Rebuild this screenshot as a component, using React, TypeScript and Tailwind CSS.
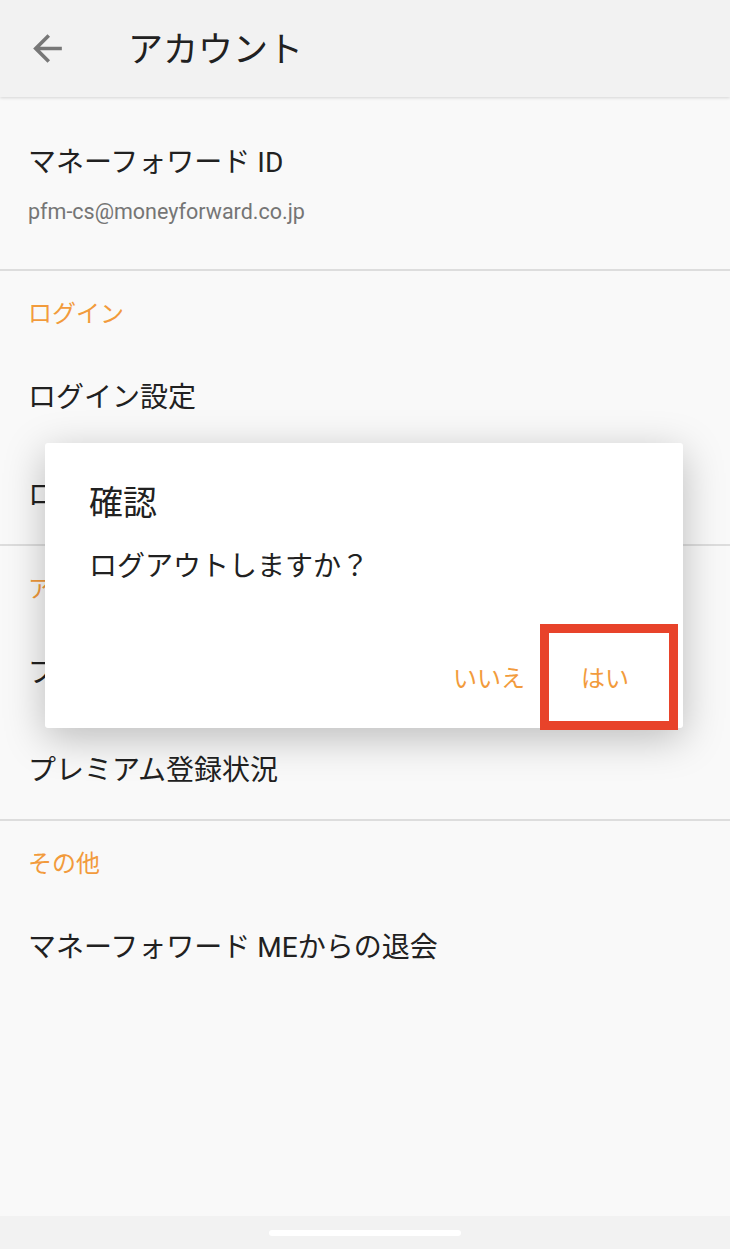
const font = { fontFamily: 'Roboto, "Noto Sans CJK JP", "Noto Sans", sans-serif' }

function SectionHeader({ label }: { label: string }) {
  return (
    <div className="h-[77px] pl-[28px] pt-[28px] text-[24px] leading-[30px] text-[#f29b3c]">
      {label}
    </div>
  )
}

function Row({ label }: { label: string }) {
  return (
    <div className="flex h-[98px] items-center pl-[28px] pt-[2px] text-[28px] text-[#212121]">
      {label}
    </div>
  )
}

export default function App() {
  return (
    <div
      className="relative flex h-[1249px] w-[730px] flex-col overflow-hidden bg-[#f9f9f9]"
      style={font}
    >
      <header className="z-10 flex h-[97px] shrink-0 items-center bg-[#f2f2f2] shadow-[0_1px_3px_rgba(0,0,0,0.15)]">
        <svg viewBox="0 0 24 24" className="ml-[26px] h-[43px] w-[43px] fill-[#777777]">
          <path d="M20 11H7.83l5.59-5.59L12 4l-8 8 8 8 1.41-1.41L7.83 13H20v-2z" />
        </svg>
        <h1 className="ml-[59px] pt-[6px] text-[35px] font-normal text-[#212121]">アカウント</h1>
      </header>

      <main className="flex-1">
        <section className="flex h-[174px] flex-col border-b-2 border-[#dddddd] pl-[28px]">
          <div className="mt-[47px] text-[28px] leading-[38px] text-[#212121]">マネーフォワード ID</div>
          <div className="mt-[17px] text-[21.5px] leading-[26px] text-[#757575]">pfm-cs@moneyforward.co.jp</div>
        </section>

        <section className="border-b-2 border-[#dddddd]">
          <SectionHeader label="ログイン" />
          <Row label="ログイン設定" />
          <Row label="ログアウト" />
        </section>

        <section className="border-b-2 border-[#dddddd]">
          <SectionHeader label="アカウント管理" />
          <Row label="プレミアムサービス" />
          <Row label="プレミアム登録状況" />
        </section>

        <section>
          <SectionHeader label="その他" />
          <Row label="マネーフォワード MEからの退会" />
        </section>
      </main>

      <footer className="flex h-[33px] shrink-0 items-center justify-center bg-[#f2f2f2]">
        <div className="h-[6px] w-[192px] rounded-full bg-white" />
      </footer>

      {/* confirm dialog */}
      <div className="absolute left-[45px] top-[443px] flex h-[285px] w-[638px] flex-col rounded-[3px] bg-white shadow-[0_10px_40px_rgba(0,0,0,0.25)]">
        <div className="pl-[44px] pt-[38px] text-[34px] leading-[44px] text-[#212121]">確認</div>
        <div className="pl-[44px] pt-[24px] text-[28px] leading-[36px] text-[#212121]">
          ログアウトしますか？
        </div>
        <div className="mt-auto mb-[33px] flex items-center justify-end gap-[56px] pr-[54px] text-[24px] leading-[32px] text-[#f29b3c]">
          <button type="button">いいえ</button>
          <div className="relative">
            <button type="button">はい</button>
            <div className="pointer-events-none absolute left-[-41px] top-[-39px] h-[106px] w-[138px] border-[9px] border-[#e8432a]" />
          </div>
        </div>
      </div>
    </div>
  )
}
